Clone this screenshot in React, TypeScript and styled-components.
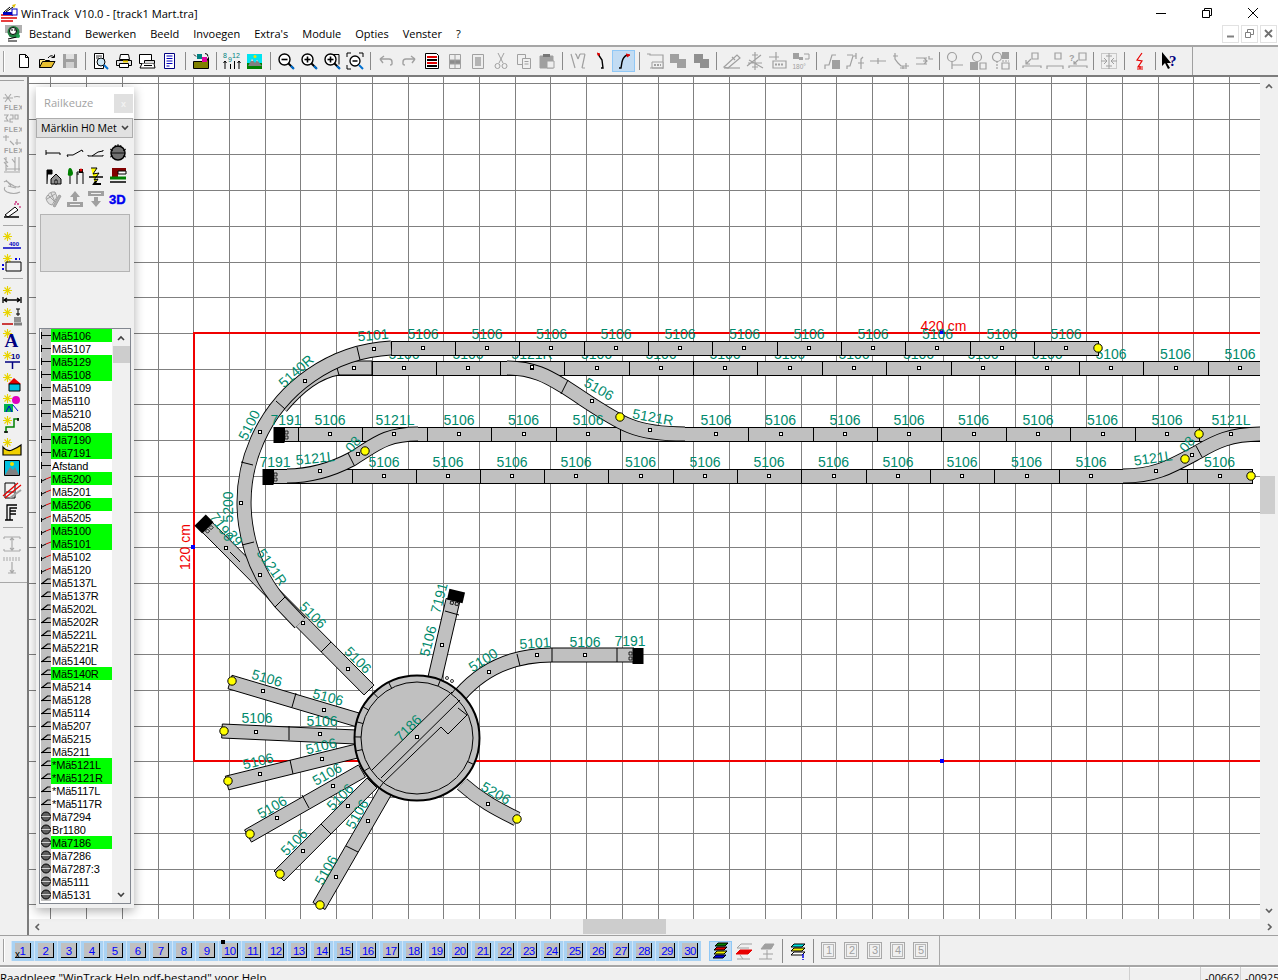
import React from 'react';
import styled, { createGlobalStyle } from 'styled-components';

const Global = createGlobalStyle`
  html, body { margin: 0; padding: 0; background: #fff; overflow: hidden; }
  #root { width: 1280px; height: 980px; overflow: hidden; }
  * { box-sizing: border-box; }
`;

const UI = `"Open Sans", "Liberation Sans", sans-serif`;
const ARIAL = `"Liberation Sans", Arial, sans-serif`;
const G = '#a0a0a0';
const TEAL = '#008a6c';

const Window = styled.div`
  width: 1278px; height: 980px; display: flex; flex-direction: column; overflow: hidden; background: #fff;
`;
const TitleBar = styled.div`
  height: 22px; display: flex; align-items: center; padding-left: 1px; flex: none; position: relative;
`;
const TitleText = styled.span`
  font: 11.15px ${UI}; color: #000; margin-left: 3px; white-space: pre; padding-top: 5px;
`;
const WinButtons = styled.div`
  margin-left: auto; display: flex; align-items: center; margin-right: 2px; padding-top: 3px;
`;
const WinButton = styled.div`
  width: 46px; height: 22px; display: flex; align-items: center; justify-content: center;
`;
const MenuBar = styled.div`
  height: 23px; display: flex; align-items: center; padding-left: 4px; flex: none;
`;
const MenuItem = styled.span`
  font: 11px ${UI}; color: #000; padding: 0 7px; white-space: pre;
`;
const MdiGroup = styled.div`
  margin-left: auto; display: flex; gap: 2px; margin-right: 1px;
`;
const MdiButton = styled.div`
  width: 17px; height: 18px; border: 1px solid #e2e2e2; display: flex; align-items: center; justify-content: center;
`;
const ToolBar = styled.div`
  height: 32px; flex: none; background: #f0f0f0; border-top: 2px solid #a6a6a6; border-bottom: 2px solid #7c7c7c;
  display: flex; align-items: center; padding-left: 12px; position: relative;
`;
const Grip = styled.div`
  position: absolute; left: 3px; top: 4px; bottom: 3px; width: 2px; border-left: 1px solid #a0a0a0; border-right: 1px solid #fff;
`;
const ToolBtn = styled.div<{ $on?: boolean; $w?: number }>`
  width: ${p => p.$w ?? 23}px; height: 22px; flex: none; display: flex; align-items: center; justify-content: center;
  background: ${p => (p.$on ? '#c2dcf3' : 'transparent')};
  box-shadow: ${p => (p.$on ? 'inset 0 0 0 1px #90c8f6' : 'none')};
`;
const ToolSep = styled.div`
  width: 8px; height: 18px; flex: none; display: flex; justify-content: center;
  &::before { content: ''; width: 1px; height: 100%; background: #8a8a8a; }
`;
const ToolEnd = styled.div`
  width: 1px; height: 28px; background: #a0a0a0; margin-left: 10px;
`;
const Body = styled.div`
  height: 859px; flex: none; display: flex; position: relative; border-bottom: 1px solid #a0a0a0;
`;
const LeftBar = styled.div`
  width: 29px; flex: none; background: #f0f0f0; border-right: 2px solid #7c7c7c; display: flex; flex-direction: column; align-items: flex-start; padding-top: 3px;
`;
const LeftTop = styled.div`
  width: 24px; height: 1px; background: #a0a0a0; margin-bottom: 9px;
`;
const LeftBtn = styled.div`
  height: 21.7px; flex: none; display: flex; align-items: center; justify-content: center; width: 24px;
`;
const LeftSep = styled.div`
  height: 10.3px; flex: none; width: 20px; margin-left: 3px; display: flex; align-items: center;
  &::before { content: ''; width: 100%; height: 1px; background: #a8a8a8; }
`;
const LeftEnd = styled.div`
  width: 27px; height: 1px; background: #a8a8a8; margin-top: 6px;
`;
const Center = styled.div`
  flex: 1; display: flex; flex-direction: column; min-width: 0;
`;
const CanvasRow = styled.div`
  height: 842px; display: flex; flex: none;
`;
const Canvas = styled.div`
  width: 1231px; height: 842px; flex: none; background: #fff; overflow: hidden;
`;
const VScroll = styled.div`
  flex: 1; background: #f0f0f0; display: flex; flex-direction: column; align-items: center; position: relative;
`;
const VThumb = styled.div`
  position: absolute; top: 399px; left: 0; width: 15px; height: 38px; background: #cdcdcd;
`;
const ScrollArrow = styled.div<{ $end?: boolean }>`
  height: 17px; width: 100%; display: flex; align-items: center; justify-content: center; margin-top: ${p => (p.$end ? 'auto' : 0)};
`;
const HScroll = styled.div`
  height: 16px; flex: none; background: #f0f0f0; position: relative; display: flex; align-items: center; justify-content: space-between; padding: 0 1px 0 0;
`;
const HThumb = styled.div`
  position: absolute; left: 554px; top: 0; width: 83px; height: 15px; background: #cdcdcd;
`;
const HArrow = styled.div`
  width: 17px; height: 16px; display: flex; align-items: center; justify-content: center;
`;

/* floating track chooser */
const Panel = styled.div`
  position: absolute; left: 36px; top: 10px; width: 98px; height: 821px; background: #f0f0f0;
  box-shadow: 0 3px 10px rgba(0,0,0,.32); display: flex; flex-direction: column; z-index: 2;
`;
const PanelTitle = styled.div`
  height: 31px; flex: none; background: #fff; display: flex; align-items: center; padding-left: 8px;
  font: 11.2px ${UI}; color: #a3a3a3; position: relative;
`;
const PanelClose = styled.div`
  position: absolute; right: 1px; top: 7px; width: 19px; height: 19px; background: #e0e0e0; display: flex; align-items: center; justify-content: center;
  font: 700 9px ${ARIAL}; color: #f2f2f2;
`;
const Select = styled.div`
  height: 20px; flex: none; width: 97px; background: #e1e1e1; border: 1px solid #adadad; display: flex; align-items: center;
  padding-left: 4px; font: 10.6px ${UI}; color: #000; white-space: nowrap; overflow: hidden; position: relative;
`;
const SelectArrow = styled.div`
  position: absolute; right: 0; top: 0; bottom: 0; width: 15px; background: #e1e1e1; display: flex; align-items: center; justify-content: center;
`;
const IconGrid = styled.div`
  display: grid; grid-template-columns: repeat(4, 21.7px); grid-auto-rows: 22.7px; margin: 4px 0 0 6px; flex: none;
`;
const GridCell = styled.div`
  display: flex; align-items: center; justify-content: center;
`;
const PreviewBox = styled.div`
  width: 90px; height: 58px; margin: 4px 0 0 4px; background: #e0e0e0; border: 1px solid #b4b4b4; flex: none;
`;
const ListBox = styled.div`
  width: 92px; height: 576px; margin: 56px 0 0 3px; flex: none; background: #fff; border: 1px solid #828790; display: flex; overflow: hidden;
`;
const ListRows = styled.div`
  width: 72px; flex: none; padding-left: 1px; background: #fff;
`;
const ListRow = styled.div<{ $on?: boolean }>`
  height: 13px; display: flex; align-items: center; background: ${p => (p.$on ? '#00ff00' : 'transparent')};
  font: 11px/13px ${ARIAL}; letter-spacing: -0.15px; color: #000; white-space: pre;
`;
const ListText = styled.span`
  margin-top: 2px; height: 13px;
`;
const ListIcon = styled.svg`
  width: 10px; height: 13px; flex: none; margin-right: 1px; background: #c0c0c0;
`;
const ListScroll = styled.div`
  width: 18px; flex: none; background: #f0f0f0; display: flex; flex-direction: column; align-items: center; position: relative;
`;
const ListThumb = styled.div`
  position: absolute; top: 17px; left: 1px; width: 17px; height: 17px; background: #cdcdcd;
`;

/* bottom */
const LayerBar = styled.div`
  height: 29px; flex: none; background: #f0f0f0; display: flex; align-items: center; padding-left: 11px; position: relative;
`;
const LayerGrip = styled.div`
  position: absolute; left: 3px; top: 3px; bottom: 3px; width: 2px; border-left: 1px solid #a0a0a0; border-right: 1px solid #fff;
`;
const PageBtn = styled.div`
  width: 23.03px; height: 20px; flex: none; background: #a9d2f3; display: flex; align-items: center; justify-content: center; position: relative;
  border-left: 1px solid #cfe5f8;
`;
const PageInner = styled.div`
  width: 16px; height: 15px; background: #c0c0c0; border-right: 1px solid #000; border-bottom: 1px solid #000;
  display: flex; align-items: center; justify-content: center; padding-top: 1px;
  font: 11.5px ${ARIAL}; letter-spacing: -0.6px; color: #0000ff; position: relative;
`;
const PageClose = styled.span`
  position: absolute; left: 0; bottom: -3px; font: 10px/10px ${ARIAL}; color: #000; letter-spacing: 0;
`;
const PageMark = styled.span`
  position: absolute; left: -1px; top: -3px; width: 4px; height: 4px; background: #000;
`;
const LayerGap = styled.div<{ $w: number }>`
  width: ${p => p.$w}px; flex: none;
`;
const LayerBtn = styled(ToolBtn)`
  height: 20px;
`;
const LayerSep = styled(ToolSep)`
  height: 24px;
`;
const NumBtn = styled.div`
  width: 15px; height: 17px; border: 1px solid #a8a8a8; box-shadow: inset 0 0 0 1px #f0f0f0, inset 0 0 0 2px #b8b8b8;
  font: 11px/15px ${ARIAL}; text-align: center; color: #a0a0a0;
`;
const NumCell = styled.div`
  width: 23px; flex: none; display: flex; justify-content: center;
`;
const LayerEnd = styled.div`
  width: 1px; height: 100%; background: #a8a8a8; margin-left: 7px;
`;
const StatusBar = styled.div`
  flex: 1; min-height: 0; border-top: 2px solid #a6a6a6; box-shadow: inset 0 1px 0 #fff; background: #f0f0f0; display: flex; overflow: hidden;
  font: 11.4px/13px ${UI}; color: #000; padding-top: 3px; position: relative;
`;
const StatusText = styled.span`
  flex: 1; white-space: pre; margin-top: 1px;
`;
const StatusCell = styled.div<{ $w: number }>`
  width: ${p => p.$w}px; flex: none; border-left: 1px solid #d0d0d0; white-space: pre; margin-top: -3px; padding: 4px 0 0 4px; font-size: 10.8px;
`;

/* ---------- icons ---------- */
const Ic: React.FC<{ s?: number; children: React.ReactNode }> = ({ s = 20, children }) => (
  <svg width={s} height={s} viewBox="0 0 20 20" fill="none" stroke="#000" strokeWidth={1}>{children}</svg>
);
const tiny = { fontFamily: ARIAL, stroke: 'none' } as const;

const Lens = ({ k }: { k: string }) => (
  <>
    <circle cx="8.5" cy="8.5" r="5.5" fill="#fff" strokeWidth="1.4" />
    <path d="M12.5 12.5l5 5" stroke="#000" strokeWidth="2" />
    <path d="M15 15l3 3" stroke="#0070d0" strokeWidth="2" />
    <path d="M5.5 8.5h6" strokeWidth="1.6" />
    {k === 'plus' && <path d="M8.5 5.5v6" strokeWidth="1.6" />}
  </>
);

const toolIcons: Record<string, React.ReactNode> = {
  new: <path d="M5.5 3.5h6l3 3v10h-9z M11.5 3.5v3h3" fill="#fff" />,
  open: <>
    <path d="M2.5 8.5h5l1 1h4v7h-10z" fill="#ffe88a" />
    <path d="M2.5 16.5l3-6h12.5l-3.5 6z" fill="#e8c030" />
    <path d="M11 7q3-4 6-1 M17.5 3.5v3h-3" />
  </>,
  save: <g stroke="none">
    <path d="M3 3h14v14H3z" fill={G} />
    <path d="M6 3h8v5H6z" fill="#e0e0e0" />
    <path d="M6 11h8v6H6z" fill="#d0d0d0" />
  </g>,
  preview: <>
    <path d="M3.5 2.5h9v15h-9z" fill="#fff" />
    <path d="M5 5h6M5 7h3" strokeWidth=".8" />
    <circle cx="10" cy="11" r="4" fill="#cfe8f5" />
    <path d="M13 14l4 4" stroke="#0070d0" strokeWidth="2" />
  </>,
  print: <>
    <path d="M6.5 3.5h8l1 5h-10z" fill="#fff" />
    <path d="M2.5 9.5h15v5h-15z" fill="#e4e4e4" />
    <path d="M5.5 12.5h9v4h-9z" fill="#fff" />
    <path d="M9 10.5h5" stroke="#f0d000" strokeWidth="2" />
  </>,
  printprev: <>
    <path d="M2.5 3.5h12v9h-12z" fill="#fff" />
    <path d="M7.5 9.5h10v3h-10z" fill="#ddd" />
    <path d="M5 12.5l-2 4.5h15l-1-4.5" fill="#fff" />
    <path d="M7 14.5h8" />
  </>,
  list: <>
    <path d="M4.5 2.5h10v15h-10z" fill="#fff" stroke="#000080" />
    <path d="M6.5 5h6M6.5 7.500h6M6.5 10h6M6.500 12.500h6M6.5 15h3" stroke="#0000c0" />
  </>,
  folder2: <>
    <path d="M2.5 10.500h13l2 -4v11h-15z" fill="#808000" />
    <path d="M6 3h5v5H6z" fill="#008080" stroke="none" />
    <path d="M11 6h5v5h-5z" fill="#e000a0" stroke="none" />
    <path d="M3 3.500l2 2M14 2.500q3 0 3 3" />
  </>,
  nums: <>
    <text x="1" y="7" fontSize="7" fill="#008080" style={tiny}>8</text>
    <text x="10" y="7" fontSize="7" fill="#008080" style={tiny}>12</text>
    <text x="6" y="11" fontSize="7" fill="#008080" style={tiny}>9</text>
    <path d="M3 18v-8M1.500 12l1.500-2 1.500 2M8.500 18v-5M12.500 18v-8M17 18v-8M15.500 12l1.500-2 1.500 2" />
  </>,
  pic: <g stroke="none">
    <path d="M2 3h15v15H2z" fill="#00e4f0" />
    <path d="M2 12h15v6H2z" fill="#008000" />
    <path d="M3 15l4-7 3 4 2-3 5 6z" fill="#808080" />
    <path d="M6 9.700l1-1.700 1.300 1.700zM11.300 10l.7-1 1 1.300z" fill="#fff" />
    <circle cx="10" cy="5.500" r="1.500" fill="#f0e000" />
  </g>,
  zoomMinus: <Lens k="minus" />,
  zoomPlus: <Lens k="plus" />,
  zoomBox: <>
    <path d="M7 3.500h10v10" />
    <Lens k="plus" />
  </>,
  zoomFit: <>
    <path d="M2 6V2h4M14 2h4v4M2 14v4h4" />
    <circle cx="10" cy="10" r="5" fill="#fff" strokeWidth="1.300" />
    <path d="M7.500 10h5" strokeWidth="1.500" />
    <path d="M14 14l4 4" stroke="#0070d0" strokeWidth="2" />
  </>,
  undo: <path d="M4 8h9q3 0 3 3v2q0 1-2 1M4 8l4-3M4 8l3 4" stroke={G} strokeWidth="1.400" />,
  redo: <path d="M16 8H7q-3 0-3 3v2q0 1 2 1M16 8l-4-3M16 8l-3 4" stroke={G} strokeWidth="1.400" />,
  redDoc: <>
    <path d="M3.500 2.500h11l2 2v13h-13z" fill="#fff" />
    <path d="M5 6h10M5 12h10" stroke="#e00000" strokeWidth="2" />
    <path d="M5 9h10M5 15h10" strokeWidth="2" />
  </>,
  grayGrid: <g stroke={G}>
    <path d="M4.500 3.500h11v14h-11z" fill="#eee" />
    <path d="M4.500 9h11v4h-11z" fill="#8c8c8c" />
    <path d="M10 3.500v14" />
  </g>,
  grayPage: <g stroke={G}>
    <path d="M4.500 3.500h11v14h-11z" fill="#eee" />
    <path d="M7 6h6v9H7z" fill="#b4b4b4" stroke="none" />
  </g>,
  cut: <g stroke={G}>
    <path d="M7 2l5 10M13 2l-5 10" />
    <circle cx="6.500" cy="15" r="2.500" /><circle cx="13.500" cy="15" r="2.500" />
  </g>,
  copy: <g stroke={G}>
    <path d="M3.500 3.500h8v10h-8z" fill="#f0f0f0" />
    <path d="M8.500 7.500h8v10h-8z" fill="#f0f0f0" />
    <path d="M10.500 10.500h4M10.500 13h4" />
  </g>,
  paste: <g stroke={G}>
    <path d="M3 5h13v12H3z" fill={G} />
    <path d="M6 3h7v3H6z" fill="#777" stroke="none" />
    <path d="M10 10h7v7h-7z" fill="#eee" />
  </g>,
  gY: <path d="M3 3l4 14M8 3l2 5M17 3l-3 14M12 3l-2 5M7 3h1M12 3h5M14 17h3" stroke={G} strokeWidth="1.200" />,
  curveL: <>
    <path d="M7 3l4 6 1 8h-2" strokeWidth="1.400" />
    <path d="M6 2l3 1-2 2" stroke="#e00000" fill="#e00000" />
  </>,
  curveR: <>
    <path d="M13 4q-4 2-5 7l-1 6H5" strokeWidth="1.400" />
    <path d="M12 3l4 1-3 2" stroke="#e00000" fill="#e00000" />
  </>,
  railBox: <g stroke={G}>
    <path d="M2 3h3v1h13v14" strokeWidth="1.200" />
    <path d="M7 11h11v6H7z" fill="#f0f0f0" />
    <path d="M9 14h7" strokeWidth="2" strokeDasharray="2 1" />
    <path d="M5 17h13" />
  </g>,
  twoSq: <g fill={G} stroke="none"><path d="M2 3h9v9H2z" /><path d="M9 8h9v9H9z" /></g>,
  twoSq2: <g fill="#909090" stroke="none"><path d="M3 3h9v9H3z" /><path d="M9 8h9v9H9z" /></g>,
  diag: <g stroke={G} strokeWidth="1.200">
    <path d="M2 16l13-12 3 3-12 10z" />
    <path d="M2 17h16" />
    <path d="M10 6l3 3" />
  </g>,
  cross: <g stroke={G} strokeWidth="1.200">
    <path d="M2 15l14-11M4 9l14 8M10 1v18M7 4h6M7 16h6M3 12h14" />
  </g>,
  moveBox: <g stroke={G} strokeWidth="1.200">
    <path d="M1 6h10M8 1v8" />
    <path d="M5 10h13v7H5z" />
    <path d="M7 13.500h9" strokeWidth="2" strokeDasharray="2 1" />
  </g>,
  r180: <g>
    <path d="M2 2h6v6H2z" fill={G} stroke="none" />
    <path d="M8 6h4v3H8z" fill={G} stroke="none" />
    <path d="M13 3h5v5h-4" stroke={G} />
    <text x="1.500" y="18" fontSize="6.500" fill={G} style={tiny}>180°</text>
  </g>,
  sw1: <g>
    <path d="M3 18v-4h4l3-10h4" stroke={G} strokeWidth="1.200" />
    <path d="M10 9h8v9h-8z" fill={G} stroke="none" />
  </g>,
  sw2: <path d="M2 18v-3h3l3-10h3M11 8V2M16 18V8l2-2M13 12h6M2 4h6" stroke={G} strokeWidth="1.200" />,
  tee: <path d="M2 10h16M10 7v6" stroke={G} strokeWidth="1.200" />,
  branch: <path d="M4 2v6l3 4 3 3h8M2 5h5M12 15v3M15 12v6M9 17h5" stroke={G} strokeWidth="1.200" />,
  merge: <path d="M2 7h11M2 13h11M13 10h-4M10 7l3 3-3 3M15 5v3h4" stroke={G} strokeWidth="1.200" />,
  pinA: <g stroke={G} strokeWidth="1.200"><circle cx="7" cy="6" r="4.500" /><path d="M7 10.500V18M7 14h11" /></g>,
  pinB: <g stroke={G} strokeWidth="1.200">
    <circle cx="9" cy="6" r="4.500" />
    <path d="M2 11h8v8H2z" fill={G} stroke="none" />
    <path d="M12 12h6v6h-6z" />
  </g>,
  pinC: <g stroke={G} strokeWidth="1.200">
    <circle cx="6" cy="6" r="4.500" />
    <path d="M11 1h7v7h-7z" fill={G} stroke="none" />
    <path d="M6 10v8M11 10h7" strokeDasharray="2 1" />
    <path d="M11 12h7v6h-7z" />
  </g>,
  boxArrow: <g stroke={G} strokeWidth="1.200">
    <path d="M10 2h6v6h-6z" />
    <path d="M9 8l-5 5M4 9v4h4" />
    <path d="M1 17v-2h18v2" />
  </g>,
  boxLine: <g stroke={G} strokeWidth="1.200">
    <path d="M10 2h6v6h-6z" />
    <path d="M2 18v-3h16v3" />
  </g>,
  qBox: <g stroke={G} strokeWidth="1.200">
    <path d="M11 2h7v7h-7z" />
    <path d="M10 9l-4 4M6 10v3h3" />
    <path d="M1 17v-2h18v2" />
    <text x="1" y="10" fontSize="9" fontWeight="700" fill={G} style={tiny}>?</text>
  </g>,
  dotBox: <g stroke={G}>
    <path d="M2.500 2.500h15v15h-15z" strokeDasharray="1 1" />
    <path d="M2 10h6M5 7l3 3-3 3M18 10h-6M15 7l-3 3 3 3M10 2v16M7 5h6M7 15h6" />
  </g>,
  bolt: <path d="M12 2L7 9l5 1-4 6h5M10 15v3M7 18h6" stroke="#e80000" strokeWidth="1.200" />,
  help: <>
    <path d="M1 1v14l3-3 3 6 2-1-3-5h4z" fill="#000" stroke="none" />
    <text x="8" y="15" fontSize="15" fontWeight="700" fontFamily="Liberation Serif" fill="#000080" stroke="none">?</text>
  </>,
};

const Star = () => (
  <path d="M5.500 1v9M1 5.500h9M2.500 2.500l6 6M8.500 2.500l-6 6" stroke="#e8d400" strokeWidth="1.100" />
);
const flexText = (
  <text x="2" y="19" fontSize="7" fontWeight="700" fill="#a0a0a0" style={{ fontFamily: ARIAL, stroke: 'none', letterSpacing: '.4px' }}>FLEX</text>
);

const leftIcons: Record<string, React.ReactNode> = {
  flex1: <>{flexText}<path d="M3 3l6 8M9 3l-6 8M1 7h10M12 6q3-1 6 0" stroke="#a8a8a8" strokeWidth="1.100" /></>,
  flex2: <>{flexText}<path d="M2 2h4l-2 3 2 3H2M8 2h3v4H8v3h3M13 2h3v4h-3z" stroke="#a8a8a8" strokeWidth="1.100" /></>,
  flex3: <>{flexText}<path d="M4 1v6M1 3h6M8 7l4 4M13 9h6M15 5v6" stroke="#a8a8a8" strokeWidth="1.100" /></>,
  grayTrack: <path d="M2 2l4 5M2 6l4 5M4 13h14M2 16h16M13 1v14M17 1v14M10 3l3 4M4 1v14" stroke="#a8a8a8" strokeWidth="1.100" />,
  grayOval: <path d="M2 4q2-2 5 1l5 3q4 2 6 0M3 9q-2 3 2 5q7 3 13 0M6 8l8 2M4 2l5 6" stroke="#a8a8a8" strokeWidth="1.100" />,
  wand: <>
    <path d="M3 16l10-8 3 3-10 7z" fill="#fff" />
    <path d="M2 18h15" strokeWidth="1.500" />
    <path d="M12 5h2M16 4v2M14 2v2M17 8h2" stroke="#c00060" strokeWidth="1.200" />
  </>,
  star1: <><Star /><text x="7" y="15" fontSize="6" fontWeight="700" fill="#0000c0" style={tiny}>400</text><path d="M1 17h18" stroke="#0000c0" strokeWidth="1.500" /></>,
  star2: <><Star /><path d="M6 9h13v9H4v-9z" /><path d="M1 11v7" stroke="#0000e0" strokeWidth="2" strokeDasharray="2 2" /><path d="M13 6h5" stroke="#0000e0" strokeWidth="2" strokeDasharray="2 2" /></>,
  star3: <><Star /><path d="M1 12v6M19 12v6M2 15h16M2 15l3-2M2 15l3 2M18 15l-3-2M18 15l-3 2" strokeWidth="1.300" /></>,
  star4: <><Star /><path d="M12 15h7v-5h-7z" fill="#909090" stroke="none" /><path d="M0 17h11" stroke="#c00000" strokeWidth="1.500" /><path d="M14 2h4M16 2v7M14 7h4" /><path d="M12 17h8" fill="none" stroke="#808080" strokeWidth="3" /></>,
  starA: <><Star /><text x="2.500" y="19" fontSize="19" fontWeight="700" fontFamily="Liberation Serif" fill="#000080" stroke="none">A</text></>,
  star10: <><Star /><text x="9" y="9" fontSize="8" fontWeight="700" fill="#000080" style={tiny}>10</text><path d="M3 12h15M10.500 12v7" stroke="#000080" strokeWidth="1.500" /></>,
  starHouse: <><Star /><path d="M6 12l6-6 7 6z" fill="#e00000" stroke="none" /><path d="M7 12h11v7H7z" fill="#00c0e0" stroke="#000" /></>,
  starTree: <><Star /><circle cx="14" cy="7" r="4" fill="#e000c0" stroke="none" /><path d="M2 11h9v8H2z" fill="#00b050" stroke="none" /><path d="M4 19l3-6 3 6M11 12l5 6" stroke="#0000e0" /></>,
  starRoute: <><Star /><path d="M4 18v-6h8V4h5" stroke="#008000" strokeWidth="1.500" /><path d="M2 17h4M16 3v3" strokeWidth="1.500" /></>,
  starHill: <><Star /><path d="M1 10q4 5 9 3t9-5v10H1z" fill="#f0d000" stroke="#000" strokeWidth="1.200" /></>,
  picture: <g stroke="#000">
    <path d="M2.500 2.500h15v15h-15z" fill="#00c0e0" />
    <path d="M3 17l5-8 3 3 2-3 4 8z" fill="#808080" stroke="none" />
    <circle cx="10" cy="6" r="2" fill="#f0e000" stroke="none" />
  </g>,
  hatch: <g>
    <path d="M3 3h10v15H3z" />
    <path d="M3 12h10" stroke="#808080" strokeWidth="2" />
    <path d="M1 16L16 3M3 18L19 5" stroke="#e80000" strokeWidth="1.300" />
    <path d="M8 18l11-8" stroke="#a0a0a0" strokeWidth="2" />
  </g>,
  F: <path d="M5 18V3h10M8 18V6h7M8 9h6M8 12h6M3 18h8" strokeWidth="1.300" />,
  gUp: <path d="M2 3h16M2 17h16M2 3v2M18 3v2M2 17v-2M18 17v-2M10 4v12M8 6l2-2 2 2M8 14l2 2 2-2" stroke="#a8a8a8" strokeWidth="1.100" />,
  gDown: <>
    <path d="M1 3h18M1 5h18" stroke="#a8a8a8" strokeDasharray="2 1" />
    <path d="M10 7v11M8 15l2 3 2-3M6 18h8" stroke="#a8a8a8" strokeWidth="1.200" />
  </>,
};

const panelIcons: React.ReactNode[] = [
  <path d="M3 7v5M3 10h14v2" />,
  <path d="M3 14l-1-2h6l9-5 1 2" />,
  <path d="M2 13h15v-1M6 13l6-4 5-1v-1M2 12v1" />,
  <>
    <circle cx="10" cy="10" r="7" fill="#707070" strokeWidth="1.500" />
    <path d="M3 10h14M2 6l3 2M18 6l-3 2M10 1v3M2 14l3-1M18 14l-3-1M7 2l1 2M13 2l-1 2" strokeWidth=".9" />
  </>,
  <>
    <path d="M4 18V4h5v4H5" fill="#000" />
    <path d="M8 13l5-5 5 5v5H8z" fill="#909090" />
    <path d="M12 14h2v4h-2z" fill="#fff" />
  </>,
  <>
    <path d="M3 7q0-5 2-5t3 5q0 3-3 3t-2-3z" fill="#008000" stroke="none" />
    <path d="M5 10v8M12 18V6h6v12M12 8h2" />
    <path d="M14 3h4v4h-4z" fill="#000" stroke="none" />
    <circle cx="16" cy="4" r="1.500" fill="#e00000" stroke="none" />
  </>,
  <>
    <path d="M5 2l6 0-4 6 6-1L8 14l4-1-3 5" fill="#ffff00" strokeWidth="1" />
    <path d="M10 15l-2 3h7" strokeWidth="2" />
    <path d="M3 11h14" strokeWidth="1.500" />
  </>,
  <>
    <path d="M4 2h14v5h-8v5H4z" fill="#800000" stroke="none" />
    <path d="M10 5h8v3h-8z" fill="#fff" stroke="#000" />
    <path d="M2 12h16" stroke="#008000" strokeWidth="3" />
    <path d="M2 16h16" strokeWidth="1.500" />
  </>,
  <g stroke="#a0a0a0">
    <path d="M3 9q3-7 9-6l2 5-5 8q-5-1-6-7z" fill="#e0e0e0" />
    <path d="M5 6l7 7M8 4l4 9M4 10l8-5" />
    <path d="M12 18l6-11-2-1-6 11z" fill="#b0b0b0" />
  </g>,
  <g stroke="none" fill="#a0a0a0">
    <path d="M10 2l5 6h-3v4H8V8H5z" />
    <path d="M2 13h16v5H2z" />
    <path d="M5 15h10v1H5z" fill="#f0f0f0" />
  </g>,
  <g stroke="none" fill="#a0a0a0">
    <path d="M2 2h16v5H2z" />
    <path d="M5 4h10v1H5z" fill="#f0f0f0" />
    <path d="M10 18l5-6h-3V8H8v4H5z" />
  </g>,
  <text x="1" y="15" fontSize="13" fontWeight="700" fill="#0000f0" stroke="#0000f0" strokeWidth=".4" style={{ fontFamily: ARIAL }}>3D</text>,
];

const topTools = ['new', 'open', 'save', '|', 'preview', 'print', 'printprev', 'list', '|', 'folder2', '|', 'nums', 'pic', '|', 'zoomMinus', 'zoomPlus', 'zoomBox', 'zoomFit', '|', 'undo', 'redo', 'redDoc', 'grayGrid', 'grayPage', 'cut', 'copy', 'paste', '|', 'gY', 'curveL', 'curveR*', '|', 'railBox', 'twoSq', 'twoSq2', '|', 'diag', 'cross', 'moveBox', 'r180', '|', 'sw1', 'sw2', 'tee', 'branch', 'merge', '|', 'pinA', 'pinB', 'pinC', '|', 'boxArrow', 'boxLine', 'qBox', '|', 'dotBox', '|', 'bolt', '|', 'help'];
const leftTools = ['flex1', 'flex2', 'flex3', 'grayTrack', 'grayOval', 'wand', '|', 'star1', 'star2', '|', 'star3', 'star4', 'starA', 'star10', 'starHouse', 'starTree', 'starRoute', 'starHill', 'picture', 'hatch', 'F', '|', 'gUp', 'gDown'];

type Row = [string, 's' | 'c' | 't' | 'r', boolean?];
const rows: Row[] = [
  ['Mä5106', 's', true], ['Mä5107', 's'], ['Mä5129', 's', true], ['Mä5108', 's', true], ['Mä5109', 's'], ['Mä5110', 's'], ['Mä5210', 's'], ['Mä5208', 's'],
  ['Mä7190', 's', true], ['Mä7191', 's', true], ['Afstand', 's'],
  ['Mä5200', 'c', true], ['Mä5201', 'c'], ['Mä5206', 'c', true], ['Mä5205', 'c'], ['Mä5100', 'c', true], ['Mä5101', 'c', true], ['Mä5102', 'c'], ['Mä5120', 'c'],
  ['Mä5137L', 't'], ['Mä5137R', 't'], ['Mä5202L', 't'], ['Mä5202R', 't'], ['Mä5221L', 't'], ['Mä5221R', 't'], ['Mä5140L', 't'], ['Mä5140R', 't', true],
  ['Mä5214', 't'], ['Mä5128', 't'], ['Mä5114', 't'], ['Mä5207', 't'], ['Mä5215', 't'], ['Mä5211', 't'], ['*Mä5121L', 't', true], ['*Mä5121R', 't', true], ['*Mä5117L', 't'], ['*Mä5117R', 't'],
  ['Mä7294', 'r'], ['Br1180', 'r'], ['Mä7186', 'r', true], ['Mä7286', 'r'], ['Mä7287:3', 'r'], ['Mä5111', 'r'], ['Mä5131', 'r'],
];

const RowGlyph = ({ k }: { k: Row[1] }) => (
  <ListIcon viewBox="0 0 10 13" fill="none" stroke="#000">
    {k === 's' && <path d="M.5 3v7M0 6.500h10" />}
    {k === 'c' && <><path d="M0 9l1 0 4-2" stroke="#000" /><path d="M5 7l5-2" stroke="#e00000" /><path d="M.5 7v4" /></>}
    {k === 't' && <path d="M0 7.500h10M.5 8l6-5h3" strokeWidth="1.200" />}
    {k === 'r' && <><circle cx="5" cy="6.500" r="4.500" fill="#606060" /><path d="M.5 6.500h9" stroke="#d0d0d0" /></>}
  </ListIcon>
);

/* ---------- layout drawing ---------- */
const GRAY = '#c0c0c0';

const vlines: number[] = [];
for (let i = -1; i < 35; i++) vlines.push(Math.round(50.4 + 35.72 * i) + 0.5);
const hlines: number[] = [];
for (let i = 0; i < 24; i++) hlines.push(Math.round(83 + 35.71 * i) + 0.5);

const Straight = ({ xs, y }: { xs: number[]; y: number }) => (
  <g>
    {xs.slice(0, -1).map((x, i) => (
      <rect key={i} x={x + 0.5} y={y + 0.5} width={xs[i + 1] - x} height={14} fill={GRAY} stroke="#000" shapeRendering="crispEdges" />
    ))}
  </g>
);
const Dot = ({ x, y }: { x: number; y: number }) => (
  <rect x={Math.round(x - 2) + 0.5} y={Math.round(y - 2) + 0.5} width={3} height={3} fill="#fff" stroke="#000" shapeRendering="crispEdges" />
);
const Rail = ({ d }: { d: string }) => (
  <g fill="none">
    <path d={d} stroke="#000" strokeWidth={15} />
    <path d={d} stroke={GRAY} strokeWidth={13.2} />
  </g>
);
const Seg = ({ a, b, w = 14 }: { a: [number, number]; b: [number, number]; w?: number }) => {
  const dx = b[0] - a[0], dy = b[1] - a[1], l = Math.hypot(dx, dy);
  const nx = (-dy / l) * (w / 2), ny = (dx / l) * (w / 2);
  return (
    <polygon
      points={`${a[0] + nx},${a[1] + ny} ${b[0] + nx},${b[1] + ny} ${b[0] - nx},${b[1] - ny} ${a[0] - nx},${a[1] - ny}`}
      fill={GRAY} stroke="#000"
    />
  );
};
const Tick = ({ p }: { p: [number, number, number, number] }) => <line x1={p[0]} y1={p[1]} x2={p[2]} y2={p[3]} stroke="#000" />;
const Lbl = ({ x, y, r = 0, t = '5106' }: { x: number; y: number; r?: number; t?: string }) => (
  <text x={x} y={y} textAnchor="middle" dominantBaseline="central" fontSize="14" fill={TEAL} fontFamily={ARIAL}
    transform={r ? `rotate(${r} ${x} ${y})` : undefined}>{t}</text>
);
const Pin = ({ x, y }: { x: number; y: number }) => <circle cx={x} cy={y} r={4.2} fill="#ffff00" stroke="#000" />;
const Block = ({ x, y, r = 0 }: { x: number; y: number; r?: number }) => (
  <g transform={`rotate(${r} ${x} ${y})`}>
    <rect x={x - 5.500} y={y - 8} width={11} height={16} fill="#000" />
    <path d={`M${x + 6} ${y - 4}h3v3h-3zM${x + 6} ${y + 1}h3v3h-3z`} fill="none" stroke="#000" strokeWidth=".8" />
  </g>
);

const rowA = [391, 455, 519, 584, 648, 712, 777, 841, 905, 970, 1034, 1098];
const rowB = [337, 372, 436, 500, 564, 629, 693, 757, 822, 886, 951, 1015, 1079, 1143, 1208, 1272];
const rowC = [284, 298, 362, 427, 491, 556, 620, 684, 748, 813, 877, 941, 1006, 1070, 1135, 1199, 1272];
const rowD = [273, 287, 352, 416, 480, 544, 608, 673, 737, 801, 866, 930, 994, 1059, 1123, 1187, 1252];
const mids = (xs: number[], from = 0, skip: number[] = []) =>
  xs.slice(from, -1).map((x, i) => ({ x: (x + xs[from + i + 1]) / 2, i: from + i })).filter(m => !skip.includes(m.i));

const legs: { a: [number, number]; b: [number, number]; tick: [number, number, number, number] }[] = [
  { a: [230, 682], b: [358, 720], tick: [296, 693, 292, 707] },
  { a: [222, 731], b: [356, 737], tick: [289, 726, 289, 740] },
  { a: [227, 783], b: [357, 751], tick: [290, 760, 293, 774] },
  { a: [248, 836], b: [362, 771], tick: [302, 795, 309, 808] },
  { a: [279, 876], b: [372, 783], tick: [321, 824, 331, 834] },
  { a: [319, 906], b: [386, 790], tick: [346, 846, 358, 852] },
];

const Layout = () => (
  <svg width={1231} height={842} viewBox="29 77 1231 842" style={{ display: 'block' }} fontFamily={ARIAL}>
    <g stroke="#808080" shapeRendering="crispEdges">
      {vlines.map(x => <line key={x} x1={x} y1={77} x2={x} y2={919} />)}
      {hlines.map(y => <line key={y} x1={29} y1={y} x2={1260} y2={y} />)}
    </g>
    {/* module frame */}
    <path d="M1260 333H193.500V761H1260" fill="none" stroke="#f00000" strokeWidth="2" shapeRendering="crispEdges" />
    <rect x={940} y={330} width={4} height={4} fill="#0000ff" />
    <rect x={191} y={545} width={4} height={4} fill="#0000ff" />
    <rect x={940} y={759} width={4} height={4} fill="#0000ff" />
    <text x={943.500} y={331} textAnchor="middle" fontSize="14" fill="#f00000">420 cm</text>
    <text x={190} y={547} textAnchor="middle" fontSize="14" fill="#f00000" transform="rotate(-90 190 547)">120 cm</text>

    {/* labels of the second row run under the first */}
    {mids(rowB, 1).map(m => <Lbl key={m.i} x={m.x} y={354} t={m.i === 3 ? '5121R' : '5106'} />)}
    <Lbl x={348} y={356} r={-10} t="5100" />

    <Straight xs={rowB} y={361} />
    {/* turnout into the second row */}
    <Rail d="M372 368L338 368C315 372 295 390 281 407" />
    <Tick p={[335, 361, 339, 375]} />
    <Tick p={[372, 361, 372, 375]} />
    <Straight xs={rowA} y={341} />
    <Straight xs={rowC} y={427} />
    <Straight xs={rowD} y={469} />

    {/* outer curve and the diagonal into the turntable */}
    <Seg a={[204, 524]} b={[369, 690]} />
    <Rail d="M391 348A155 155 0 0 0 280 602L300 623" />
    <Tick p={[357, 347, 360, 360]} />
    <Tick p={[276, 401, 285, 409]} />
    <Tick p={[241, 462, 253, 465]} />
    <Tick p={[242, 545, 254, 542]} />
    <Tick p={[230, 552, 240, 562]} />
    <Tick p={[275, 607, 285, 597]} />
    <Tick p={[321, 652, 331, 642]} />

    {/* S-curves */}
    <Rail d="M418 434C385 434 375 445 352 459C335 468 315 476 287 476" />
    <Tick p={[348, 453, 354, 465]} />
    <Rail d="M507 368C535 368 550 378 565 387C590 403 610 418 630 426C645 432 665 434 685 434" />
    <Tick p={[561, 394, 568, 380]} />
    <Rail d="M1123 476C1155 476 1170 467 1198 452C1215 442 1230 434 1262 434" />
    <Tick p={[1196, 446, 1202, 457]} />

    {/* track ids on the tracks */}
    {mids(rowA).map(m => <Lbl key={m.i} x={m.x} y={334} />)}
    {mids(rowC, 1, [2, 6, 15]).map(m => <Lbl key={m.i} x={m.x} y={420} />)}
    {mids(rowD, 2, [14]).map(m => <Lbl key={m.i} x={m.x} y={462} />)}
    <Lbl x={395} y={420} t="5121L" />
    <Lbl x={1231} y={420} t="5121L" />
    <Lbl x={315} y={458} r={-6} t="5121L" />
    <Lbl x={1153} y={458} r={-8} t="5121L" />
    <Lbl x={353} y={444} r={-50} t="08" />
    <Lbl x={1187} y={444} r={-50} t="08" />
    <Lbl x={286} y={420} t="7191" />
    <Lbl x={275} y={462} t="7191" />
    <Lbl x={373} y={335} r={-5} t="5101" />
    <Lbl x={296} y={371} r={-42} t="5140R" />
    <Lbl x={249} y={425} r={-63} t="5100" />
    <Lbl x={228} y={507} r={-90} t="5200" />
    <Lbl x={222} y={527} r={55} t="7190" />
    <Lbl x={235} y={538} r={50} t="29" />
    <Lbl x={272} y={567} r={55} t="5121R" />
    <Lbl x={599} y={389} r={30} />
    <Lbl x={653} y={417} r={10} t="5121R" />

    {rowA.slice(0, -1).map((x, i) => <Dot key={i} x={x + 32} y={348} />)}
    {mids(rowB, 1).map(m => <Dot key={m.i} x={m.x} y={368} />)}
    {mids(rowC, 1, [2, 6, 15]).map(m => <Dot key={m.i} x={m.x} y={434} />)}
    {mids(rowD, 2, [14]).map(m => <Dot key={m.i} x={m.x} y={476} />)}
    <Dot x={374} y={349} /><Dot x={305} y={381} /><Dot x={260} y={432} /><Dot x={241} y={503} /><Dot x={354} y={368} />
    <Dot x={226} y={548} /><Dot x={260} y={575} /><Dot x={303} y={623} /><Dot x={348} y={669} />
    <Dot x={320} y={471} /><Dot x={358} y={454} /><Dot x={394} y={434} /><Dot x={532} y={367} /><Dot x={592} y={401} /><Dot x={650} y={430} />
    <Dot x={1156} y={471} /><Dot x={1192} y={455} /><Dot x={1231} y={434} />

    <Block x={279} y={435} />
    <Block x={268} y={477} />
    <Block x={204} y={524} r={45} />

    {/* tracks round the turntable */}
    <Seg a={[434, 682]} b={[453, 600]} />
    <Tick p={[445, 611, 459, 615]} />
    <Block x={456} y={596} r={103} />
    <Dot x={442} y={645} />
    <Lbl x={428} y={641} r={-75} />
    <Lbl x={439} y={598} r={-75} t="7191" />

    <Rail d="M460 695C480 672 510 655 552 655L634 655" />
    <Tick p={[517, 654, 520, 666]} />
    <Tick p={[552, 648, 552, 662]} />
    <Tick p={[617, 648, 617, 662]} />
    <Block x={638} y={656} r={180} />
    <Dot x={489} y={672} /><Dot x={537} y={655} /><Dot x={585} y={655} />
    <Lbl x={483} y={660} r={-32} t="5100" />
    <Lbl x={535} y={643} r={-4} t="5101" />
    <Lbl x={585} y={642} />
    <Lbl x={630} y={641} t="7191" />

    <Rail d="M462 784C480 800 495 808 517 819" />
    <Dot x={488} y={804} />
    <Lbl x={496} y={793} r={30} t="5206" />
    <Pin x={517} y={819} />

    {legs.map((l, i) => (
      <g key={i}>
        <Seg a={l.a} b={l.b} />
        <Tick p={l.tick} />
      </g>
    ))}
    <Dot x={263} y={691} /><Dot x={324} y={710} />
    <Dot x={256} y={732} /><Dot x={320} y={734} />
    <Dot x={260} y={774} /><Dot x={322} y={759} />
    <Dot x={277} y={818} /><Dot x={333} y={786} />
    <Dot x={303} y={851} /><Dot x={348} y={806} />
    <Dot x={336} y={877} /><Dot x={368} y={821} />
    <Lbl x={313} y={615} r={45} />
    <Lbl x={358} y={660} r={45} />
    <Lbl x={267} y={678} r={16} /><Lbl x={328} y={697} r={15} />
    <Lbl x={257} y={718} /><Lbl x={322} y={721} />
    <Lbl x={258} y={761} r={-14} /><Lbl x={321} y={746} r={-13} />
    <Lbl x={272} y={807} r={-30} /><Lbl x={327} y={774} r={-30} />
    <Lbl x={294} y={842} r={-45} /><Lbl x={340} y={797} r={-45} />
    <Lbl x={326} y={870} r={-60} /><Lbl x={357} y={814} r={-60} />

    {/* turntable */}
    <circle cx={417} cy={738} r={62.500} fill={GRAY} stroke="#000" strokeWidth={2} />
    <circle cx={417} cy={738} r={56} fill="none" stroke="#000" />
    {[-68, -52, 25, 127, 148, 168, 181, 195, 210, 226, 243].map(a => {
      const c = Math.cos((a * Math.PI) / 180), s = Math.sin((a * Math.PI) / 180);
      return <line key={a} x1={417 + 56 * c} y1={738 + 56 * s} x2={417 + 62 * c} y2={738 + 62 * s} stroke="#000" />;
    })}
    <path d="M452 692L372 770M460 700L381 778" fill="none" stroke="#000" />
    <path d="M458 708L467 715L448 734L441 727L383 783" fill="none" stroke="#000" />
    <Dot x={417} y={737} />
    <Lbl x={408} y={728} r={-45} t="7186" />
    <circle cx={447} cy={678} r={1.500} fill="#fff" stroke="#000" strokeWidth=".8" />
    <circle cx={452} cy={681} r={1.500} fill="#fff" stroke="#000" strokeWidth=".8" />

    <Pin x={1098} y={348} />
    <Pin x={1251} y={476} />
    <Pin x={1185} y={459} />
    <Pin x={1199} y={434} />
    <Pin x={365} y={451} />
    <Pin x={620} y={417} />
    <Pin x={232} y={681} />
    <Pin x={224} y={731} />
    <Pin x={228} y={781} />
    <Pin x={250} y={834} />
    <Pin x={280} y={874} />
    <Pin x={320} y={905} />
  </svg>
);

const Chevron = ({ d, c = '#606060' }: { d: 'u' | 'd' | 'l' | 'r'; c?: string }) => {
  const p = { u: 'M2 7l3-3 3 3', d: 'M2 3l3 3 3-3', l: 'M6 2L3 5l3 3', r: 'M4 2l3 3-3 3' }[d];
  return <svg width="10" height="10" viewBox="0 0 10 10" fill="none" stroke={c} strokeWidth="1.600"><path d={p} /></svg>;
};

export default function App() {
  return (
    <Window>
      <Global />
      <TitleBar>
        <svg width="17" height="18" viewBox="0 0 17 18" style={{ marginTop: 4 }}>
          <path d="M0 11h12M0 14h16M0 17h12" stroke="#e00000" strokeWidth="1.500" />
          <path d="M2 8h14v3H2z" fill="#0000c0" />
          <path d="M3 8L9 3M5 8l7-5" stroke="#000" />
          <path d="M11 1l4-1-2 4z" fill="#e0c000" />
          <rect x="11" y="5" width="5" height="6" fill="#fff" stroke="#0000c0" />
        </svg>
        <TitleText>WinTrack  V10.0 - [track1 Mart.tra]</TitleText>
        <WinButtons>
          <WinButton><svg width="10" height="10"><path d="M0 5.500h10" stroke="#000" /></svg></WinButton>
          <WinButton><svg width="10" height="10" fill="none" stroke="#000"><path d="M.5 2.500h7v7h-7zM2.500 2.500v-2h7v7h-2" /></svg></WinButton>
          <WinButton><svg width="10" height="10" stroke="#000"><path d="M0 0l10 10M10 0L0 10" /></svg></WinButton>
        </WinButtons>
      </TitleBar>
      <MenuBar>
        <svg width="17" height="17" viewBox="0 0 17 17" style={{ marginLeft: 1 }}>
          <path d="M0 0h17v8H0z" fill="#b0b0b0" />
          <circle cx="8.500" cy="7" r="6" fill="#208040" />
          <circle cx="8" cy="6" r="3.500" fill="#fff" stroke="#000" />
          <path d="M6 5h2M9 5h2M3 14l9-2M3 16h9" stroke="#000" />
          <circle cx="13" cy="11" r="2" fill="#20a050" />
        </svg>
        {['Bestand', 'Bewerken', 'Beeld', 'Invoegen', "Extra's", 'Module', 'Opties', 'Venster', '?'].map(m => (
          <MenuItem key={m}>{m}</MenuItem>
        ))}
        <MdiGroup>
          <MdiButton><svg width="9" height="9"><path d="M1 7.500h7" stroke="#808080" strokeWidth="2" /></svg></MdiButton>
          <MdiButton><svg width="9" height="9" fill="none" stroke="#808080"><path d="M.5 3.500h5v5h-5zM2.500 3V.5h6v5H6" /></svg></MdiButton>
          <MdiButton><svg width="9" height="9" stroke="#707070" strokeWidth="1.800"><path d="M1 1l7 7M8 1L1 8" /></svg></MdiButton>
        </MdiGroup>
      </MenuBar>
      <ToolBar>
        <Grip />
        {topTools.map((t, i) => {
          if (t === '|') return <ToolSep key={i} />;
          const on = t.endsWith('*');
          return <ToolBtn key={i} $on={on}><Ic>{toolIcons[t.replace('*', '')]}</Ic></ToolBtn>;
        })}
        <ToolEnd />
      </ToolBar>
      <Body>
        <LeftBar>
          <LeftTop />
          {leftTools.map((t, i) =>
            t === '|' ? <LeftSep key={i} /> : <LeftBtn key={i}><Ic>{leftIcons[t]}</Ic></LeftBtn>
          )}
          <LeftEnd />
        </LeftBar>
        <Center>
          <CanvasRow>
            <Canvas><Layout /></Canvas>
            <VScroll>
              <ScrollArrow><Chevron d="u" /></ScrollArrow>
              <VThumb />
              <ScrollArrow $end><Chevron d="d" /></ScrollArrow>
            </VScroll>
          </CanvasRow>
          <HScroll>
            <HArrow><Chevron d="l" /></HArrow>
            <HThumb />
            <HArrow><Chevron d="r" /></HArrow>
          </HScroll>
        </Center>
        <Panel>
          <PanelTitle>Railkeuze<PanelClose>x</PanelClose></PanelTitle>
          <Select>Märklin H0 Met.<SelectArrow><Chevron d="d" c="#404040" /></SelectArrow></Select>
          <IconGrid>
            {panelIcons.map((ic, i) => <GridCell key={i}><Ic>{ic}</Ic></GridCell>)}
          </IconGrid>
          <PreviewBox />
          <ListBox>
            <ListRows>
              {rows.map(([t, k, on]) => (
                <ListRow key={t} $on={on}><RowGlyph k={k} /><ListText>{t}</ListText></ListRow>
              ))}
            </ListRows>
            <ListScroll>
              <ScrollArrow><Chevron d="u" c="#404040" /></ScrollArrow>
              <ListThumb />
              <ScrollArrow $end><Chevron d="d" c="#404040" /></ScrollArrow>
            </ListScroll>
          </ListBox>
        </Panel>
      </Body>
      <LayerBar>
        <LayerGrip />
        {Array.from({ length: 30 }, (_, i) => i + 1).map(n => (
          <PageBtn key={n}>
            <PageInner>
              {n}
              {n === 1 && <PageClose>x</PageClose>}
              {n === 10 && <PageMark />}
            </PageInner>
          </PageBtn>
        ))}
        <LayerGap $w={8} />
        <LayerBtn $on>
          <Ic>
            <path d="M4 5l3-3h10l-3 3z" fill="#008000" />
            <path d="M3 9l3-3h10l-3 3z" fill="#e00000" />
            <path d="M3 13l3-3h10l-3 3z" fill="#f0f000" />
            <path d="M2 17l3-3h10l-3 3z" fill="#0000e0" />
          </Ic>
        </LayerBtn>
        <LayerBtn>
          <Ic>
            <path d="M3 7l4-4h11" stroke={G} />
            <path d="M2 13l4-4h12l-4 4z" fill="#e80000" stroke="#e80000" />
            <path d="M3 18h13M6 14l3 4M3 7h12" stroke={G} />
          </Ic>
        </LayerBtn>
        <LayerBtn>
          <Ic>
            <path d="M4 8l4-5h9l-3 5z" fill={G} stroke={G} />
            <path d="M2 18h13M6 13h10M10 9v9" stroke={G} />
          </Ic>
        </LayerBtn>
        <LayerSep />
        <LayerBtn>
          <Ic>
            <path d="M3 6l3-3h11l-3 3z" fill="#00e0e0" />
            <path d="M3 10l3-3h11l-3 3z" fill="#f0f000" />
            <path d="M3 14l3-3h11l-3 3z" fill="#fff" />
            <path d="M15 13v4M15 18v1" stroke="#0000e0" strokeWidth="1.500" />
          </Ic>
        </LayerBtn>
        <LayerSep />
        {[1, 2, 3, 4, 5].map(n => <NumCell key={n}><NumBtn>{n}</NumBtn></NumCell>)}
        <LayerEnd />
      </LayerBar>
      <StatusBar>
        <StatusText>Raadpleeg "WinTrack Help.pdf-bestand" voor Help.</StatusText>
        <StatusCell $w={71}> </StatusCell>
        <StatusCell $w={40}>-00662</StatusCell>
        <StatusCell $w={38}>-00925</StatusCell>
      </StatusBar>
    </Window>
  );
}
